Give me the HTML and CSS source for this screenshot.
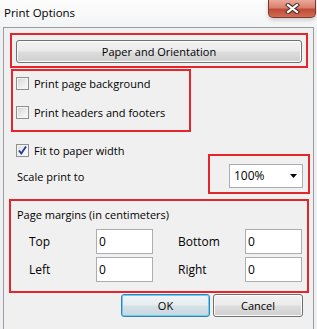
FILE: index.html
```html
<!DOCTYPE html>
<html lang="en">
<head>
<meta charset="UTF-8">
<link rel="stylesheet" href="styles.css">
<title>Print Options</title>
</head>
<body>

<div class="titlebar">
	<span class="title">Print Options</span>
	<span class="close">
		<svg width="15" height="11" viewBox="0 0 15 11">
			<path d="M3 2 L12 9 M12 2 L3 9" stroke="#45302c" stroke-width="4.2" stroke-linecap="square" fill="none"/>
			<path d="M3 2 L12 9 M12 2 L3 9" stroke="#fff" stroke-width="2.2" stroke-linecap="square" fill="none"/>
		</svg>
	</span>
</div>

<div class="panel">

	<div class="mark mark-paper">
		<button class="btn btn-wide">Paper and Orientation</button>
	</div>

	<div class="mark mark-checks">
		<label class="check"><span class="box"></span>Print page background</label>
		<label class="check"><span class="box"></span>Print headers and footers</label>
	</div>

	<label class="check check-fit">
		<span class="box">
			<svg width="11" height="11" viewBox="0 0 11 11">
				<path d="M2 5.5 L4.3 8.5 L9 1.5" stroke="#1f3a93" stroke-width="1.8" fill="none"/>
			</svg>
		</span>Fit to paper width
	</label>

	<div class="scale-row">
		<span class="scale-label">Scale print to</span>
		<div class="mark mark-scale">
			<div class="select">
				<span>100%</span>
				<svg width="7" height="4" viewBox="0 0 7 4"><path d="M0 0 H7 L3.5 4 Z" fill="#000"/></svg>
			</div>
		</div>
	</div>

	<div class="mark mark-margins">
		<div class="legend">Page margins (in centimeters)</div>
		<div class="margin-grid">
			<span>Top</span><input type="text" value="0">
			<span>Bottom</span><input type="text" value="0">
			<span>Left</span><input type="text" value="0">
			<span>Right</span><input type="text" value="0">
		</div>
	</div>

	<div class="actions">
		<button class="btn btn-ok">OK</button>
		<button class="btn">Cancel</button>
	</div>

</div>

</body>
</html>
```

FILE: styles.css
```css
* {
	box-sizing: border-box;
	margin: 0;
	padding: 0;
}

body {
	width: 317px;
	height: 329px;
	overflow: hidden;
	background: #eef0f2;
	color: #000;
	font: 11px "Open Sans", "Noto Sans", sans-serif;
	line-height: 16px;
}

/* window chrome */

.titlebar {
	height: 27px;
	display: flex;
	justify-content: space-between;
	align-items: flex-start;
	background: linear-gradient(#fdfdfd, #f3f4f5);
}

.title {
	padding: 5px 0 0 4px;
	font-size: 11.5px;
}

.close {
	width: 48px;
	height: 18px;
	margin-right: 1px;
	display: flex;
	align-items: center;
	justify-content: center;
	border: 1px solid #7b3a30;
	border-top: 0;
	border-radius: 0 0 5px 5px;
	background: linear-gradient(#eaa898, #d8806e 45%, #c14a36 55%, #cf6d58);
	box-shadow: 0 2px 4px rgba(0, 0, 0, 0.18);
}

.panel {
	height: 302px;
	margin: 0 3px;
	border: 1px solid #9c9c9c;
	border-bottom: 0;
	background: #f0f0f0;
}

/* red highlight frames */

.mark {
	border: 2px solid #e4252c;
}

.mark-paper {
	margin: 5px 5px 0 6px;
	padding: 5px 4px 3px 4px;
}

.mark-checks {
	width: 180px;
	margin: 1px 0 0 7px;
	padding: 4px 3px 9px 3px;
}

.mark-scale {
	margin-right: 3px;
	padding: 8px 5px 4px 19px;
}

.mark-margins {
	width: 300px;
	height: 94px;
	margin: 5px 0 0 5px;
	padding: 6px 6px 0 6px;
}

/* buttons */

.btn {
	height: 23px;
	width: 89px;
	border: 1px solid #707070;
	border-radius: 3px;
	background: linear-gradient(#f2f2f2, #ebebeb 48%, #dddddd 52%, #cfcfcf);
	box-shadow: inset 0 0 0 1px #fbfbfb;
	font: inherit;
	color: #000;
}

.btn-wide {
	width: 100%;
}

.btn-ok {
	border-color: #3c7fb1;
	box-shadow: inset 0 0 0 1px #5fd3f7;
	background: linear-gradient(#eef4f7, #e6edf1 48%, #d6e1e7 52%, #c9d6dd);
}

.actions {
	display: flex;
	justify-content: flex-end;
	gap: 3px;
	margin-top: 1px;
	padding-right: 10px;
}

.actions .btn + .btn {
	width: 90px;
}

/* check boxes */

.check {
	height: 17px;
	display: flex;
	align-items: center;
	gap: 5px;
}

.check + .check {
	margin-top: 12px;
}

.check-fit {
	margin: 10px 0 0 12px;
}

.box {
	width: 13px;
	height: 13px;
	flex: none;
	display: flex;
	align-items: center;
	justify-content: center;
	border: 1px solid #8e8f8f;
	background: linear-gradient(135deg, #d2d2d2, #f2f2f2 70%, #fafafa);
	box-shadow: inset 0 0 0 1px #f4f4f4;
}

.check-fit .box {
	background: linear-gradient(135deg, #dcdcdc, #f6f6f6 70%, #fcfcfc);
}

/* scale selector */

.scale-row {
	display: flex;
	justify-content: space-between;
	align-items: flex-start;
	margin-top: -5px;
	padding-left: 13px;
}

.scale-label {
	margin-top: 15px;
}

.select {
	width: 74px;
	height: 24px;
	display: flex;
	align-items: center;
	justify-content: space-between;
	padding: 0 5px 0 4px;
	border: 1px solid #abadb3;
	background: #fff;
	font-size: 12px;
}

/* margins */

.margin-grid {
	display: grid;
	grid-template-columns: 67px 82px 67px 58px;
	row-gap: 3px;
	align-items: center;
	margin-top: 6px;
	padding-left: 12px;
	font-size: 12px;
}

.margin-grid input {
	width: 57px;
	height: 25px;
	padding: 0 0 0 2px;
	border: 1px solid #abadb3;
	background: #fff;
	font: inherit;
	color: #000;
	outline: none;
}
```
